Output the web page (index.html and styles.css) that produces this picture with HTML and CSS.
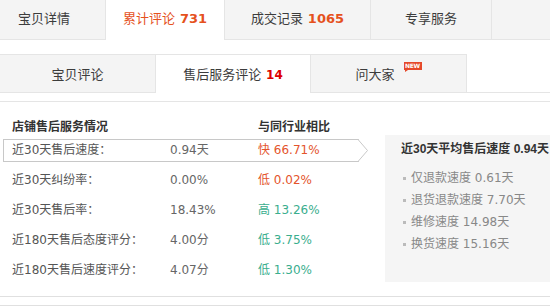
FILE: index.html
```html
<!DOCTYPE html>
<html lang="zh">
<head>
<meta charset="utf-8">
<link rel="stylesheet" href="styles.css">
</head>
<body>
<div class="tabbar">
  <div class="tab t1">宝贝详情</div>
  <div class="tab t2 active">累计评论 <b class="num">731</b></div>
  <div class="tab t3">成交记录 <b class="num">1065</b></div>
  <div class="tab t4">专享服务</div>
  <div class="tab fill"></div>
</div>

<div class="subtabs">
  <div class="stab s1">宝贝评论</div>
  <div class="stab s2 active">售后服务评论 <b class="red">14</b></div>
  <div class="stab s3">问大家<span class="badge">NEW</span></div>
  <div class="stab sfill"></div>
</div>

<div class="content">
  <div class="left">
    <div class="head">
      <span class="c1 w">店铺售后服务情况</span>
      <span class="c3">与同行业相比</span>
    </div>
    <div class="row active">
      <span class="c1">近30天售后速度：</span>
      <span class="c2">0.94天</span>
      <span class="c3 bad">快 66.71%</span>
      <svg class="arrow" width="11" height="23" viewBox="0 0 11 23"><polyline points="0,0.5 9.5,11.5 0,22.5" fill="#fff" stroke="#c8c8c8" stroke-width="1"/></svg>
    </div>
    <div class="row">
      <span class="c1">近30天纠纷率：</span>
      <span class="c2">0.00%</span>
      <span class="c3 bad">低 0.02%</span>
    </div>
    <div class="row">
      <span class="c1">近30天售后率：</span>
      <span class="c2">18.43%</span>
      <span class="c3 good">高 13.26%</span>
    </div>
    <div class="row">
      <span class="c1">近180天售后态度评分：</span>
      <span class="c2">4.00分</span>
      <span class="c3 good">低 3.75%</span>
    </div>
    <div class="row">
      <span class="c1">近180天售后速度评分：</span>
      <span class="c2">4.07分</span>
      <span class="c3 good">低 1.30%</span>
    </div>
  </div>
  <div class="panel">
    <div class="ptitle">近30天平均售后速度 0.94天</div>
    <ul class="plist">
      <li>仅退款速度 0.61天</li>
      <li>退货退款速度 7.70天</li>
      <li>维修速度 14.98天</li>
      <li>换货速度 15.16天</li>
    </ul>
  </div>
</div>
<div class="footer"></div>
</body>
</html>
```
FILE: styles.css
```css
* { box-sizing: border-box; }
html, body { margin: 0; padding: 0; background: #fff; }
body {
  font-family: "DejaVu Sans", "Noto Sans CJK SC", sans-serif;
  font-size: 12px;
  color: #555;
  width: 550px;
  overflow: hidden;
}

/* top tabs */
.tabbar { display: flex; height: 40px; }
.tab {
  flex-shrink: 0;
  height: 40px;
  line-height: 36px;
  font-size: 13px;
  color: #3c3c3c;
  text-align: center;
  background: #f4f4f4;
  border-bottom: 1px solid #e5e5e5;
  white-space: nowrap;
  font-family: "Noto Sans CJK SC", "DejaVu Sans", sans-serif;
}
.tab .num { font-family: "DejaVu Sans", sans-serif; font-size: 13px; color: #e5511d; margin-left: 2px; }
.t1 { width: 105px; text-align: left; padding-left: 18px; }
.t2 { width: 120px; }
.t3 { width: 146px; border-right: 1px solid #e5e5e5; }
.t4 { width: 121px; border-right: 1px solid #e5e5e5; }
.fill { flex: 1; }
.tab.active {
  background: #fff;
  border-bottom: 0;
  border-left: 1px solid #e5e5e5;
  border-right: 1px solid #e5e5e5;
  color: #e5511d;
}

/* sub tabs */
.subtabs { display: flex; padding-top: 14px; }
.stab {
  flex-shrink: 0;
  height: 39px;
  line-height: 38px;
  font-size: 13px;
  color: #3c3c3c;
  text-align: center;
  background: #f4f4f4;
  border-top: 1px solid #e5e5e5;
  border-bottom: 1px solid #e5e5e5;
  white-space: nowrap;
  font-family: "Noto Sans CJK SC", "DejaVu Sans", sans-serif;
}
.s1 { width: 155px; }
.s2 { width: 156px; }
.s3 { width: 156px; border-right: 1px solid #e5e5e5; }
.sfill { flex: 1; background: #fff; border-top: 0; }
.stab.active {
  background: #fff;
  border-bottom: 0;
  border-left: 1px solid #e5e5e5;
  border-right: 1px solid #e5e5e5;
}
.red { color: #d00; font-family: "DejaVu Sans", sans-serif; font-size: 12px; margin-left: 2px; }
.badge {
  position: relative;
  top: -9px;
  display: inline-block;
  margin-left: 9px;
  width: 18px;
  height: 8px;
  line-height: 8px;
  font-size: 6px;
  font-weight: bold;
  color: #fff;
  background: #e5482a;
  font-family: "DejaVu Sans", sans-serif;
  letter-spacing: -0.3px;
  vertical-align: middle;
}
.badge::after {
  content: "";
  position: absolute;
  left: 1px;
  bottom: -2px;
  border-top: 2px solid #e5482a;
  border-right: 3px solid transparent;
}

/* content */
.content {
  display: flex;
  margin-top: 8px;
  border-top: 1px solid #e5e5e5;
}
.left { width: 385px; flex-shrink: 0; padding-left: 3px; }
.head {
  display: flex;
  margin-top: 15px;
  margin-bottom: 2px;
  height: 20px;
  line-height: 20px;
  padding-left: 9px;
  font-weight: bold;
  color: #333;
}
.head .w { width: 246px; }
.row {
  position: relative;
  display: flex;
  width: 356px;
  height: 23px;
  line-height: 21px;
  padding-left: 8px;
  margin-bottom: 7px;
  border: 1px solid transparent;
  color: #555;
}
.row:last-child { margin-bottom: 0; }
.row.active { border-color: #c8c8c8; border-right: 0; }
.c1 { width: 158px; white-space: nowrap; }
.row .c1 { width: 158px; }
.c2 { width: 88px; color: #666; }
.c3 { white-space: nowrap; }
.bad { color: #e4542c; }
.good { color: #3aae8e; }
.arrow { position: absolute; left: 100%; top: -1px; margin-left: -1px; }

.panel {
  flex: 1;
  min-width: 0;
  margin-top: 33px;
  height: 147px;
  background: #f5f5f5;
  padding: 4px 0 0 16px;
}
.ptitle {
  height: 20px;
  line-height: 20px;
  font-weight: bold;
  color: #333;
  white-space: nowrap;
  font-family: "Liberation Sans", "Noto Sans CJK SC", sans-serif;
}
.plist { list-style: none; margin: 8px 0 0; padding: 0; }
.plist li {
  position: relative;
  height: 22px;
  line-height: 22px;
  padding-left: 10px;
  color: #888;
  white-space: nowrap;
}
.plist li::before {
  content: "";
  position: absolute;
  left: 2px;
  top: 10px;
  width: 3px;
  height: 3px;
  background: #bbb;
}

.footer {
  margin-top: 14px;
  height: 10px;
  border-top: 1px solid #e0e0e0;
  border-bottom: 1px solid #e0e0e0;
}
```
